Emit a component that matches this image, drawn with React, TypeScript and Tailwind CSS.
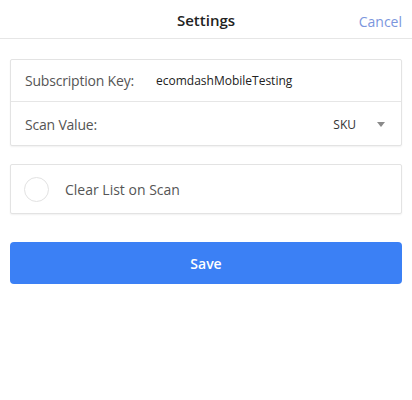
export default function App() {
  return (
    <div
      className="min-h-[400px] w-full bg-white text-[#555]"
      style={{ fontFamily: '"Open Sans", "Noto Sans", sans-serif' }}
    >
      <header className="relative flex h-[39px] items-center justify-center border-b border-[#e6e6e6] pt-[3px]">
        <h1 className="text-[15px] font-semibold text-[#222]">Settings</h1>
        <button className="absolute right-[10px] top-[11px] text-[14px] text-[#7b96dd]">Cancel</button>
      </header>

      <div className="px-[10px] pt-[20px]">
        <div className="rounded-[2px] border border-[#e3e3e3] bg-white shadow-[0_1px_2px_rgba(0,0,0,0.06)]">
          <div className="flex h-[42px] items-center border-b border-[#e6e6e6] pl-[14px]">
            <span className="w-[131px] text-[14px] tracking-[-0.2px] text-[#555]">Subscription Key:</span>
            <span className="text-[12px] text-[#222]">ecomdashMobileTesting</span>
          </div>
          <div className="flex h-[43px] items-center pl-[14px] pr-[16px] pt-[2px]">
            <span className="flex-1 text-[14px] tracking-[-0.2px] text-[#555]">Scan Value:</span>
            <span className="text-[12px] text-[#333]">SKU</span>
            <svg className="ml-[21px]" width="8" height="5" viewBox="0 0 8 5">
              <path d="M0 0h8L4 5z" fill="#8a8a8a" />
            </svg>
          </div>
        </div>

        <div className="mt-[18px] flex h-[50px] items-center rounded-[2px] border border-[#e3e3e3] bg-white pl-[13px] shadow-[0_1px_2px_rgba(0,0,0,0.06)]">
          <span className="h-[25px] w-[25px] rounded-full border border-[#e2e2e2]" />
          <span className="ml-[16px] text-[14px] text-[#555]">Clear List on Scan</span>
        </div>

        <button className="mt-[28px] flex h-[42px] w-full items-center justify-center rounded-[4px] bg-[#3b80f5] text-[14px] font-semibold text-white">
          Save
        </button>
      </div>
    </div>
  );
}
